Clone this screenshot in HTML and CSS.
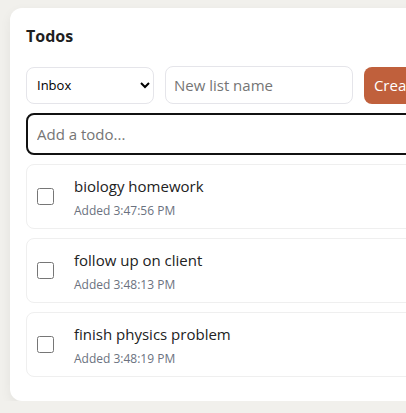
FILE: index.html
```html
<!DOCTYPE html>
<html>
<head>
<meta charset="utf-8">
<link rel="stylesheet" href="styles.css">
</head>
<body>
<div class="card">
  <h1 class="title">Todos</h1>
  <div class="toolbar">
    <select class="list-select"><option>Inbox</option></select>
    <input class="list-name" type="text" placeholder="New list name">
    <button class="create-btn">Create list</button>
  </div>
  <input class="add-todo" type="text" placeholder="Add a todo..." autofocus>
  <ul class="todos">
    <li class="todo">
      <input type="checkbox" class="check">
      <div class="todo-body">
        <div class="todo-text">biology homework</div>
        <div class="todo-meta">Added 3:47:56 PM</div>
      </div>
    </li>
    <li class="todo">
      <input type="checkbox" class="check">
      <div class="todo-body">
        <div class="todo-text">follow up on client</div>
        <div class="todo-meta">Added 3:48:13 PM</div>
      </div>
    </li>
    <li class="todo">
      <input type="checkbox" class="check">
      <div class="todo-body">
        <div class="todo-text">finish physics problem</div>
        <div class="todo-meta">Added 3:48:19 PM</div>
      </div>
    </li>
  </ul>
</div>
</body>
</html>
```
FILE: styles.css
```css
html, body {
  margin: 0;
  padding: 0;
}
body {
  background: #f1f0ec;
  font-family: "Open Sans", "Noto Sans", sans-serif;
  padding: 8px 0 0 10px;
  overflow: hidden;
}
.card {
  background: #fff;
  border-radius: 12px;
  width: 460px;
  padding: 16px 16px 24px 16px;
  box-sizing: border-box;
  box-shadow: 0 4px 12px rgba(0,0,0,0.06);
}
.title {
  margin: 1px 0 19px 0;
  font-size: 16px;
  font-weight: 700;
  color: #1f1f1f;
  line-height: 22px;
}
.toolbar {
  display: flex;
  gap: 11px;
  align-items: center;
  margin-bottom: 9px;
}
.list-select {
  width: 130px;
  height: 37px;
  border: 1px solid #e5e5ea;
  border-radius: 8px;
  background: #fff;
  font-family: "Open Sans", sans-serif;
  font-size: 13px;
  padding: 0 6px;
  color: #000;
}
.list-name {
  width: 188px;
  height: 38px;
  box-sizing: border-box;
  border: 1px solid #e5e5ea;
  border-radius: 8px;
  padding: 0 8px;
  font-family: "Open Sans", sans-serif;
  font-size: 15px;
}
.list-name::placeholder, .add-todo::placeholder {
  color: #757575;
}
.create-btn {
  height: 37px;
  background: #c0603c;
  color: #fff;
  border: none;
  border-radius: 8px;
  padding: 0 10px;
  font-family: "Open Sans", sans-serif;
  font-size: 15px;
  white-space: nowrap;
}
.add-todo {
  display: block;
  width: 420px;
  height: 42px;
  box-sizing: border-box;
  border: 2px solid #111;
  border-radius: 8px;
  padding: 0 9px;
  font-family: "Open Sans", sans-serif;
  font-size: 15px;
  outline: none;
  margin-bottom: 9px;
}
.todos {
  list-style: none;
  margin: 0;
  padding: 0;
  display: flex;
  flex-direction: column;
  gap: 9px;
}
.todo {
  display: flex;
  align-items: center;
  gap: 20px;
  height: 65px;
  box-sizing: border-box;
  border: 1px solid #efefef;
  border-radius: 8px;
  padding: 0 10px;
}
.check {
  width: 17px;
  height: 17px;
  margin: 0;
  flex: none;
}
.todo-body {
  display: flex;
  flex-direction: column;
  gap: 6px;
}
.todo-text {
  font-size: 15px;
  color: #222;
  line-height: 22px;
}
.todo-meta {
  font-size: 12px;
  color: #6b7280;
  line-height: 16px;
}
```
